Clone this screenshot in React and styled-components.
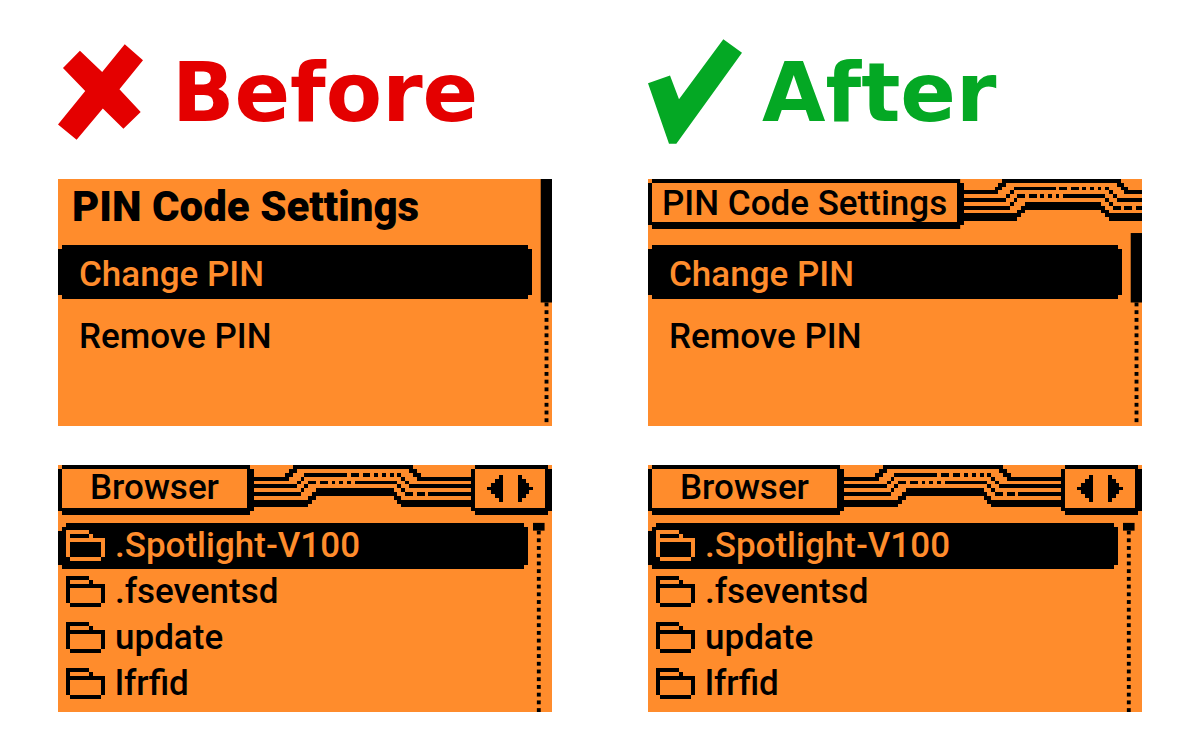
import React from 'react';
import styled, { createGlobalStyle } from 'styled-components';

const GlobalStyle = createGlobalStyle`
  * {
    box-sizing: border-box;
  }
  body {
    margin: 0;
    background: #ffffff;
    font-family: Roboto, sans-serif;
  }
`

const orange = '#ff8c2c';

const Page = styled.main`
  display: grid;
  grid-template-columns: 1fr 1fr;
  column-gap: 96px;
  padding: 39px 58px 36px;
`

const Column = styled.section`
  display: flex;
  flex-direction: column;
  min-width: 0;
`

const Heading = styled.header`
  display: flex;
  align-items: center;
  gap: 20px;
  height: 105px;
  margin-bottom: 35px;
  color: ${(props) => props.$color};
`

const IconBox = styled.div`
  display: flex;
  align-items: center;
  width: 94px;
`

const Title = styled.h1`
  margin: 0;
  padding-top: 2px;
  font-family: "DejaVu Sans", sans-serif;
  font-size: 82px;
  font-weight: 700;
  line-height: 103px;
`

const Screen = styled.div`
  position: relative;
  display: flex;
  flex-direction: column;
  aspect-ratio: 2 / 1;
  background: ${orange};
  color: #000000;
  overflow: hidden;

  & + & {
    margin-top: 39px;
  }
`

const BoldTitle = styled.h2`
  margin: 0;
  padding: 4px 14px 0;
  height: 66px;
  font-size: 42px;
  font-weight: 900;
  line-height: 48px;
`

const TopBar = styled.div`
  display: flex;
  align-items: flex-start;
  height: 50px;
  margin-bottom: ${(props) => props.$space}px;
`

const Tab = styled.div`
  flex: none;
  display: flex;
  justify-content: center;
  height: 50px;
  padding: ${(props) => props.$pad};
  border: solid #000000;
  border-width: 4px 7px 7px 4px;
  clip-path: polygon(4px 0, calc(100% - 4px) 0, calc(100% - 4px) 4px, 100% 4px, 100% calc(100% - 4px), calc(100% - 4px) calc(100% - 4px), calc(100% - 4px) 100%, 4px 100%, 4px calc(100% - 4px), 0 calc(100% - 4px), 0 4px, 4px 4px);
`

const TabTitle = styled.h2`
  margin: 0;
  font-size: 35px;
  font-weight: 500;
  line-height: 38px;
  white-space: nowrap;
`

const Wires = styled.svg`
  flex: 1;
  min-width: 0;
  height: 42px;
`

const ArrowButton = styled.button`
  display: flex;
  align-items: center;
  padding: 0;
  border: none;
  background: none;
  color: inherit;
`

const List = styled.ul`
  display: flex;
  flex-direction: column;
  gap: ${(props) => props.$gap}px;
  margin: 0;
  padding: 0 ${(props) => props.$right}px 0 0;
  list-style: none;
`

const Item = styled.button`
  display: flex;
  align-items: center;
  width: 100%;
  border: none;
  background: ${(props) => (props.$active ? '#000000' : 'transparent')};
  color: ${(props) => (props.$active ? orange : '#000000')};
  font-family: inherit;
  font-size: 35px;
  font-weight: 500;
  text-align: left;
  white-space: nowrap;
`

const MenuItem = styled(Item)`
  height: 54px;
  padding: 4px 21px 0;
  clip-path: polygon(4px 0, calc(100% - 4px) 0, calc(100% - 4px) 4px, 100% 4px, 100% calc(100% - 4px), calc(100% - 4px) calc(100% - 4px), calc(100% - 4px) 100%, 4px 100%, 4px calc(100% - 4px), 0 calc(100% - 4px), 0 4px, 4px 4px);
`

const FileItem = styled(Item)`
  gap: 10px;
  height: 46px;
  padding: 0 8px 2px;
  clip-path: polygon(8px 0, calc(100% - 4px) 0, calc(100% - 4px) 4px, 100% 4px, 100% calc(100% - 4px), calc(100% - 4px) calc(100% - 4px), calc(100% - 4px) 100%, 4px 100%, 4px calc(100% - 4px), 0 calc(100% - 4px), 0 8px, 4px 8px, 4px 4px, 8px 4px);
`

const Scroll = styled.svg`
  position: absolute;
  top: 0;
  right: 0;
  height: 100%;
`

// [row, start, end] on the 128x64 display grid, counted from the tab edge
const wires = [
  [3, 0, 9], [2, 8, 10], [1, 9, 11], [0, 10, 41], [1, 40, 42], [2, 41, 43], [3, 42, 56],
  [5, 0, 11], [4, 11, 12], [3, 12, 13], [2, 13, 24], [2, 25, 27], [2, 28, 30], [2, 31, 32],
  [2, 33, 34], [2, 35, 36], [2, 37, 38], [3, 38, 39], [4, 39, 40], [5, 40, 56],
  [7, 0, 12], [6, 12, 13], [5, 13, 14], [4, 14, 16], [4, 17, 19], [4, 20, 21], [4, 22, 23],
  [4, 24, 25], [4, 26, 37], [5, 37, 38], [6, 38, 39], [7, 39, 41], [7, 42, 44], [7, 45, 56],
  [9, 0, 15], [10, 0, 14], [8, 14, 16], [7, 15, 37], [6, 16, 36], [8, 36, 38], [9, 37, 56], [10, 38, 56],
];

const files = ['.Spotlight-V100', '.fseventsd', 'update', 'lfrfid'];

function CrossIcon() {
  return (
    <svg width="85" height="96" viewBox="54 70 256 288" fill="currentColor" aria-hidden="true">
      <path d="M120 90 187 154 255 70 310 118 239 206 303 274 251 325 189 264 110 358 54 312 136 211 69 142Z" />
    </svg>
  )
}

function CheckIcon() {
  return (
    <svg width="94" height="105" viewBox="56 58 282 314" fill="currentColor" aria-hidden="true">
      <path d="M282 58 338 99 141 372H119L56 190 122 167 149 238Z" />
    </svg>
  )
}

function FolderIcon() {
  return (
    <svg width="39" height="31" viewBox="0 0 10 8" fill="currentColor" shapeRendering="crispEdges" aria-hidden="true">
      <path d="M0 0H6V1H7V2H10V7H9V3H1V7H0ZM1 1V2H6V1ZM1 7H9V8H1Z" fillRule="evenodd" />
    </svg>
  )
}

function WireArt() {
  return (
    <Wires viewBox="0 0 56 11" preserveAspectRatio="xMinYMin slice" shapeRendering="crispEdges" aria-hidden="true">
      {wires.map(([row, start, end]) => (
        <rect key={`${row}-${start}`} x={start} y={row} width={end - start} height="1" />
      ))}
    </Wires>
  )
}

function ScrollBar({ x, from, to }) {
  const dots = [];
  for (let y = to; y < 64; y += 2) {
    dots.push(y);
  }
  return (
    <Scroll viewBox="0 0 5 64" aria-hidden="true">
      <rect x={x} y={from} width="3" height={to - from} />
      {dots.map((y) => <rect key={y} x={x + 1} y={y} width="1" height="1" />)}
    </Scroll>
  )
}

function PinMenu() {
  return (
    <List $gap={8} $right={20}>
      <li><MenuItem type="button" $active>Change PIN</MenuItem></li>
      <li><MenuItem type="button">Remove PIN</MenuItem></li>
    </List>
  )
}

function BrowserScreen() {
  return (
    <Screen>
      <TopBar $space={8}>
        <Tab $pad="0 28px"><TabTitle>Browser</TabTitle></Tab>
        <WireArt />
        <Tab $pad="0 12px">
          <ArrowButton type="button" aria-label="Previous">
            <svg width="31" height="27" viewBox="0 0 8 7" shapeRendering="crispEdges">
              <path d="M4 0V7H3V6H2V5H1V4H0V3H1V2H2V1H3V0Z" />
            </svg>
          </ArrowButton>
          <ArrowButton type="button" aria-label="Next">
            <svg width="15" height="27" viewBox="0 0 4 7" shapeRendering="crispEdges">
              <path d="M0 0V7H1V6H2V5H3V4H4V3H3V2H2V1H1V0Z" />
            </svg>
          </ArrowButton>
        </Tab>
      </TopBar>
      <List $gap={0} $right={24}>
        {files.map((name, i) => (
          <li key={name}>
            <FileItem type="button" $active={i === 0}>
              <FolderIcon />
              {name}
            </FileItem>
          </li>
        ))}
      </List>
      <ScrollBar x={0} from={15} to={17} />
    </Screen>
  )
}

function App() {
  return (
    <>
      <GlobalStyle />
      <Page>
        <Column>
          <Heading $color="#e40000">
            <IconBox><CrossIcon /></IconBox>
            <Title>Before</Title>
          </Heading>
          <Screen>
            <BoldTitle>PIN Code Settings</BoldTitle>
            <PinMenu />
            <ScrollBar x={2} from={0} to={32} />
          </Screen>
          <BrowserScreen />
        </Column>
        <Column>
          <Heading $color="#04a824">
            <IconBox><CheckIcon /></IconBox>
            <Title>After</Title>
          </Heading>
          <Screen>
            <TopBar $space={16}>
              <Tab $pad="2px 10px 0"><TabTitle>PIN Code Settings</TabTitle></Tab>
              <WireArt />
            </TopBar>
            <PinMenu />
            <ScrollBar x={2} from={14} to={32} />
          </Screen>
          <BrowserScreen />
        </Column>
      </Page>
    </>
  )
}

export default App;
